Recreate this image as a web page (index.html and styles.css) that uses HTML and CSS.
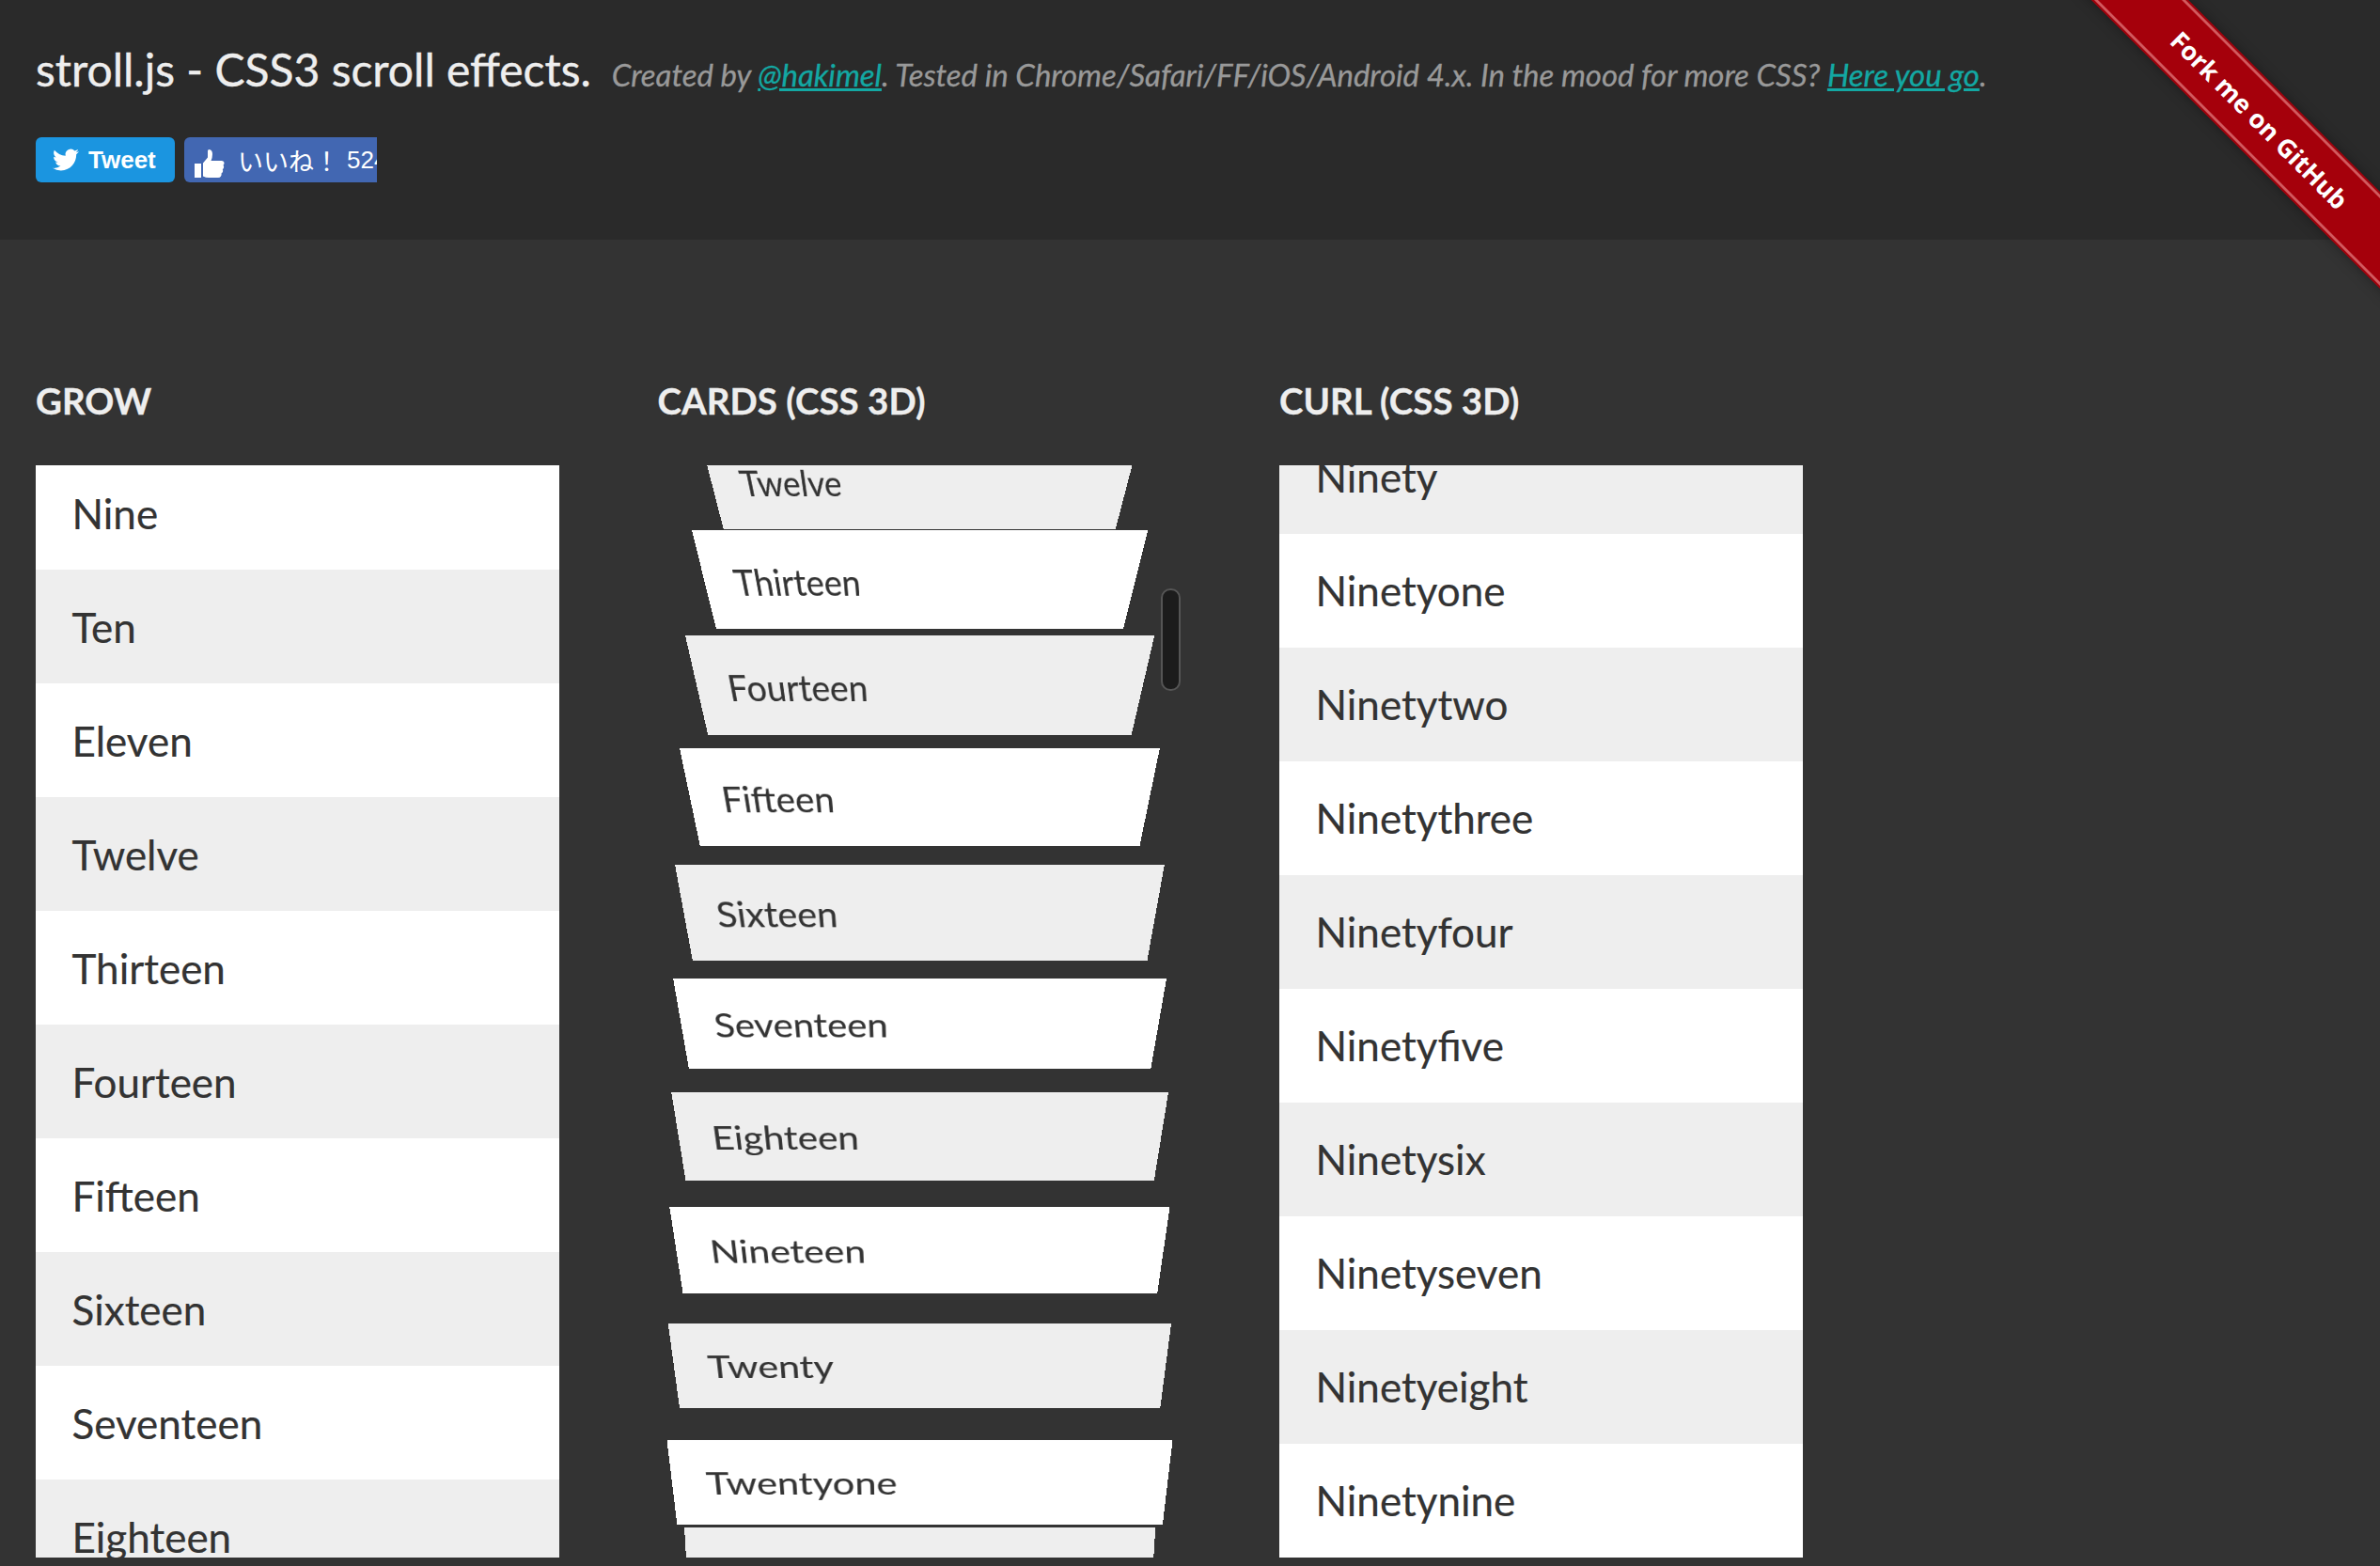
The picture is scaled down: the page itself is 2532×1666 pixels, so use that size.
FILE: index.html
```html
<!DOCTYPE html>
<html lang="en">
<head>
<meta charset="utf-8">
<title>stroll.js - CSS3 scroll effects.</title>
<link rel="stylesheet" href="styles.css">
</head>
<body>
<header class="site-header">
  <div class="title-row">
    <h1 class="title">stroll.js - CSS3 scroll effects.</h1>
    <p class="tagline">Created by <a href="#">@hakimel</a>. Tested in Chrome/Safari/FF/iOS/Android 4.x. In the mood for more CSS? <a href="#">Here you go</a>.</p>
  </div>
  <div class="share">
    <a class="btn-tweet" href="#">
      <svg class="bird" viewBox="0 0 24 24" aria-hidden="true"><path d="M23.953 4.57a10 10 0 01-2.825.775 4.958 4.958 0 002.163-2.723c-.951.555-2.005.959-3.127 1.184a4.92 4.92 0 00-8.384 4.482C7.69 8.095 4.067 6.13 1.64 3.162a4.822 4.822 0 00-.666 2.475c0 1.71.87 3.213 2.188 4.096a4.904 4.904 0 01-2.228-.616v.06a4.923 4.923 0 003.946 4.827 4.996 4.996 0 01-2.212.085 4.936 4.936 0 004.604 3.417 9.867 9.867 0 01-6.102 2.105c-.39 0-.779-.023-1.17-.067a13.995 13.995 0 007.557 2.209c9.053 0 13.998-7.496 13.998-13.985 0-.21 0-.42-.015-.63A9.935 9.935 0 0024 4.59z"/></svg>
      <span>Tweet</span>
    </a>
    <a class="btn-like" href="#">
      <svg class="thumb" viewBox="0 0 32 31" aria-hidden="true"><path d="M0 15h7v15H0z"/><path d="M9 14.500 14 8.500V1.500Q14 0 15.500 0Q19 .5 19 5Q19 8.500 17.500 12H28.500Q31.500 12 31.500 14.500Q31.500 16 30.500 16.800Q31.500 18 31 19.500Q30.500 20.800 29.800 21.200Q30.500 22.500 30 23.800Q29.500 25 28.500 25.500Q29 27 28 28.500Q27 30 25 30H15Q12 30 9 28.500z"/></svg>
      <span class="like-label">いいね！</span>
      <span class="like-count">524</span>
    </a>
  </div>
</header>

<a class="ribbon-corner" href="#"><span class="ribbon">Fork me on GitHub</span></a>

<main class="columns">
  <section class="column">
    <h2 class="column-title">GROW</h2>
    <div class="viewport">
      <ul class="list list-grow">
        <li>Nine</li><li>Ten</li><li>Eleven</li><li>Twelve</li><li>Thirteen</li><li>Fourteen</li><li>Fifteen</li><li>Sixteen</li><li>Seventeen</li><li>Eighteen</li>
      </ul>
    </div>
  </section>
  <section class="column">
    <h2 class="column-title">CARDS (CSS 3D)</h2>
    <div class="viewport">
      <ul class="list list-cards flip">
        <li class="card-twelve">Twelve</li>
        <li class="card-thirteen">Thirteen</li>
        <li class="card-fourteen">Fourteen</li>
        <li class="card-fifteen">Fifteen</li>
        <li class="card-sixteen">Sixteen</li>
        <li class="card-seventeen">Seventeen</li>
        <li class="card-eighteen">Eighteen</li>
        <li class="card-nineteen">Nineteen</li>
        <li class="card-twenty">Twenty</li>
        <li class="card-twentyone">Twentyone</li>
        <li class="card-twentytwo">Twentytwo</li>
      </ul>
    </div>
    <div class="scroll-thumb"></div>
  </section>
  <section class="column">
    <h2 class="column-title">CURL (CSS 3D)</h2>
    <div class="viewport">
      <ul class="list list-curl flip">
        <li>Ninety</li><li>Ninetyone</li><li>Ninetytwo</li><li>Ninetythree</li><li>Ninetyfour</li><li>Ninetyfive</li><li>Ninetysix</li><li>Ninetyseven</li><li>Ninetyeight</li><li>Ninetynine</li>
      </ul>
    </div>
  </section>
</main>
</body>
</html>
```
FILE: styles.css
```css
html, body {
  margin: 0;
  height: 100%;
  overflow: hidden;
}
body {
  background: #333;
  color: #eee;
  font-family: Lato, "Noto Sans", sans-serif;
  position: relative;
}
a { color: inherit; }

.site-header {
  height: 255px;
  box-sizing: border-box;
  background: #2a2a2a;
  padding: 44px 38px 0;
}
.title-row {
  display: flex;
  align-items: baseline;
  gap: 22px;
  height: 60px;
}
.title {
  margin: 0;
  font-size: 48px;
  font-weight: 400;
  line-height: 60px;
  color: #eee;
  white-space: nowrap;
  -webkit-text-stroke: .4px #eee;
}
.tagline {
  margin: 0;
  font-size: 33px;
  font-style: italic;
  letter-spacing: -.05px;
  color: #999;
  white-space: nowrap;
  -webkit-text-stroke: .3px currentColor;
}
.tagline a { color: #13a8a3; }

.share {
  display: flex;
  gap: 10px;
  margin-top: 42px;
}
.btn-tweet, .btn-like {
  display: flex;
  align-items: center;
  height: 48px;
  color: #fff;
  text-decoration: none;
  box-sizing: border-box;
}
.btn-tweet {
  width: 148px;
  padding-left: 18px;
  gap: 10px;
  background: #1b95e0;
  border-radius: 6px;
  font: bold 26px "Liberation Sans", Arial, sans-serif;
}
.bird { width: 28px; height: 28px; fill: #fff; }
.btn-like {
  width: 205px;
  padding-left: 11px;
  background: #4267b2;
  border-radius: 6px 0 0 6px;
  overflow: hidden;
  white-space: nowrap;
}
.thumb { width: 32px; height: 31px; fill: #fff; flex: none; margin-top: 8px; }
.like-label {
  margin-left: 14px;
  font: 27px "Noto Sans CJK JP", sans-serif;
}
.like-count {
  margin-left: 8px;
  font: 26px "Liberation Sans", Arial, sans-serif;
}

.ribbon-corner {
  position: absolute;
  top: 0;
  right: 0;
  width: 432px;
  height: 400px;
  overflow: hidden;
  text-decoration: none;
}
.ribbon {
  position: absolute;
  left: -96px;
  top: 93px;
  width: 800px;
  height: 69px;
  box-sizing: border-box;
  transform: rotate(45deg);
  background: #a5000b;
  border-top: 3px solid #d2595e;
  border-bottom: 3px solid #d2595e;
  outline: 2px solid #a5000b;
  box-shadow: 0 0 14px 2px rgba(0, 0, 0, .35);
  color: #fff;
  font: bold 27px/63px "Open Sans", sans-serif;
  text-align: center;
}

.columns {
  display: flex;
  gap: 104.500px;
  padding: 141px 38px 0;
}
.column {
  width: 557px;
  position: relative;
}
.column-title {
  margin: 0 0 39px;
  font-size: 38.500px;
  font-weight: 700;
  line-height: 60px;
  color: #eee;
  white-space: nowrap;
  -webkit-text-stroke: .3px #eee;
}
.viewport {
  height: 1162px;
  overflow: hidden;
}
.list {
  list-style: none;
  margin: 0;
  padding: 0;
  color: #333;
  font-size: 44px;
  -webkit-text-stroke: .2px #333;
}
.list li {
  height: 121px;
  line-height: 122px;
  padding-left: 38.500px;
  box-sizing: border-box;
  background: #fff;
}
.list li:nth-child(even) { background: #eee; }
.flip li { background: #eee; }
.flip li:nth-child(even) { background: #fff; }

.list-grow { margin-top: -10px; }
.list-curl { margin-top: -48px; }
.list-curl li { line-height: 120px; }

.list-cards li {
  transform-origin: 0 0;
  backface-visibility: hidden;
  line-height: 121px;
}
.card-twelve    { transform: matrix3d(.8454,0,0,0, .2950,.9311,0,.001066, 0,0,1,0, 43,-36,0,1); }
.card-thirteen  { transform: matrix3d(.8713,0,0,0, .2770,.9237,0,.001002, 0,0,1,0, 36,-52,0,1); }
.card-fourteen  { transform: matrix3d(.8959,0,0,0, .2465,.9110,0,.000890, 0,0,1,0, 29.1,-60.6,0,1); }
.card-fifteen   { transform: matrix3d(.9172,0,0,0, .2144,.8916,0,.000764, 0,0,1,0, 23,-62,0,1); }
.card-sixteen   { transform: matrix3d(.9352,0,0,0, .1788,.8718,0,.000636, 0,0,1,0, 18,-59.4,0,1); }
.card-seventeen { transform: matrix3d(.9425,0,0,0, .1574,.8160,0,.000565, 0,0,1,0, 16.1,-59.2,0,1); }
.card-eighteen  { transform: matrix3d(.9495,0,0,0, .1414,.7963,0,.000507, 0,0,1,0, 14.2,-59.2,0,1); }
.card-nineteen  { transform: matrix3d(.9555,0,0,0, .1293,.7706,0,.000450, 0,0,1,0, 12.3,-57.7,0,1); }
.card-twenty    { transform: matrix3d(.9612,0,0,0, .1106,.7590,0,.000389, 0,0,1,0, 10.7,-55.3,0,1); }
.card-twentyone { transform: matrix3d(.9659,0,0,0, .0962,.7517,0,.000342, 0,0,1,0, 9.5,-51.8,0,1); }
.card-twentytwo { transform: matrix3d(.9,0,0,0, .0518,.7457,0,.00019, 0,0,1,0, 28,-80.2,0,1); }

.scroll-thumb {
  position: absolute;
  right: 1px;
  top: 230px;
  width: 21px;
  height: 109px;
  box-sizing: border-box;
  background: #1c1c1c;
  border: 2px solid #555;
  border-radius: 10px;
}
```
